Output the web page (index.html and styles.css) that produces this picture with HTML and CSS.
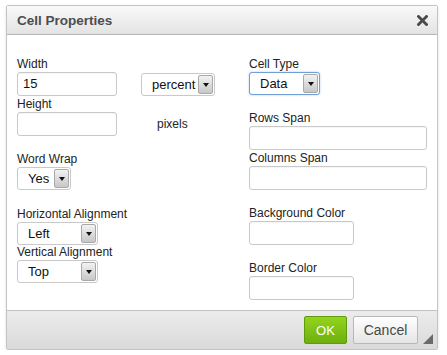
FILE: index.html
```html
<!DOCTYPE html>
<html lang="en">

<head>
  <meta charset="UTF-8">
  <meta name="viewport" content="width=device-width, initial-scale=1.0">
  <title>Cell Properties</title>
  <link rel="stylesheet" href="styles.css">
</head>

<body>

  <div class="dialog">
    <div class="dialog-title">
      <span>Cell Properties</span>
      <svg class="close" width="11" height="11" viewBox="0 0 11 11">
        <path d="M1.5 1.5 L9.5 9.5 M9.5 1.5 L1.5 9.5" stroke="#4a4a4a" stroke-width="2.8" stroke-linecap="square" />
      </svg>
    </div>

    <div class="dialog-body">
      <div class="col col-left">
        <div class="pair">
          <div class="field">
            <label>Width</label>
            <div class="input w100">15</div>
          </div>
          <div class="select w74"><span>percent</span><i class="arrow"></i></div>
        </div>
        <div class="pair pair-height">
          <div class="field">
            <label>Height</label>
            <div class="input w100"></div>
          </div>
          <div class="unit">pixels</div>
        </div>

        <div class="field gap">
          <label>Word Wrap</label>
          <div class="select w54"><span>Yes</span><i class="arrow"></i></div>
        </div>

        <div class="field gap">
          <label>Horizontal Alignment</label>
          <div class="select w81"><span>Left</span><i class="arrow"></i></div>
        </div>
        <div class="field">
          <label>Vertical Alignment</label>
          <div class="select w81"><span>Top</span><i class="arrow"></i></div>
        </div>
      </div>

      <div class="col col-right">
        <div class="field">
          <label>Cell Type</label>
          <div class="select w71 focused"><span>Data</span><i class="arrow"></i></div>
        </div>
        <div class="field gap">
          <label>Rows Span</label>
          <div class="input w178"></div>
        </div>
        <div class="field tight">
          <label>Columns Span</label>
          <div class="input w178"></div>
        </div>
        <div class="field gap">
          <label>Background Color</label>
          <div class="input w105"></div>
        </div>
        <div class="field gap">
          <label>Border Color</label>
          <div class="input w105"></div>
        </div>
      </div>
    </div>

    <div class="dialog-footer">
      <button class="btn btn-ok">OK</button>
      <button class="btn btn-cancel">Cancel</button>
    </div>

    <svg class="resizer" width="10" height="10" viewBox="0 0 10 10">
      <path d="M10 0 L10 10 L0 10 Z" fill="#6a6a6a" />
    </svg>
  </div>

</body>

</html>
```

FILE: styles.css
```css
body {
  margin: 0;
  padding: 0;
  background-color: #fff;
  font-family: "Liberation Sans", Arial, sans-serif;
  font-size: 12px;
  color: #222;
}

.dialog {
  position: relative;
  width: 432px;
  margin: 5px 0 0 6px;
  border: 1px solid #c4c4c4;
  border-radius: 2px;
  box-shadow: 0 1px 3px rgba(0, 0, 0, 0.12);
  box-sizing: border-box;
}

.dialog-title {
  display: flex;
  align-items: center;
  justify-content: space-between;
  height: 28px;
  padding: 0 9px 0 10px;
  background: linear-gradient(#f9f9f9, #e3e3e3);
  border-bottom: 1px solid #b4b4b4;
  font-size: 13.5px;
  font-weight: bold;
  color: #4d4d4d;
}

.close {
  margin-top: 1px;
}

.dialog-body {
  display: flex;
  height: 275px;
  padding: 22px 10px 0 10px;
  background-color: #fff;
  box-sizing: border-box;
}

.col-left {
  width: 232px;
}

.col-right {
  width: 178px;
}

.field label {
  display: block;
  height: 15px;
  line-height: 15px;
}

.field.gap {
  margin-top: 16px;
}

.col-left .field.gap:nth-child(4) {
  margin-top: 17px;
}

.field.tight,
.pair-height {
  margin-top: 1px;
}

.pair {
  display: flex;
  align-items: flex-end;
  gap: 24px;
}

.unit {
  height: 24px;
  line-height: 24px;
  margin-left: 16px;
}

.input,
.select {
  height: 24px;
  line-height: 22px;
  border: 1px solid #c9c9c9;
  border-radius: 3px;
  background-color: #fff;
  box-sizing: border-box;
  font-size: 13px;
  color: #111;
}

.input {
  padding-left: 5px;
  box-shadow: inset 0 1px 1px rgba(0, 0, 0, 0.04);
}

.select {
  display: flex;
  justify-content: space-between;
  height: 23px;
  line-height: 21px;
  padding: 0 1px 0 10px;
}

.select.focused {
  border-color: #6f9fd6;
  box-shadow: 0 0 2px rgba(90, 140, 210, 0.5);
}

.arrow {
  position: relative;
  width: 15px;
  height: 19px;
  margin-top: 1px;
  border: 1px solid #a9a9a9;
  border-radius: 2px;
  background: linear-gradient(#f2f2f2, #c7c7c7);
  box-sizing: border-box;
}

.arrow::after {
  content: "";
  position: absolute;
  left: 3.5px;
  top: 7px;
  border-left: 3.5px solid transparent;
  border-right: 3.5px solid transparent;
  border-top: 4px solid #111;
}

.w54 { width: 54px; }
.w71 { width: 71px; }
.w74 { width: 74px; }
.w81 { width: 81px; }
.w100 { width: 100px; }
.w105 { width: 105px; }
.w178 { width: 178px; }

.dialog-footer {
  display: flex;
  justify-content: flex-end;
  align-items: flex-start;
  gap: 6px;
  height: 39px;
  padding: 5px 19px 0 0;
  border-top: 1px solid #c2c2c2;
  background: linear-gradient(#ececec, #d9d9d9);
  box-sizing: border-box;
}

.btn {
  height: 28px;
  padding: 0;
  border-radius: 2px;
  font-family: "Liberation Sans", Arial, sans-serif;
  font-size: 13px;
}

.btn-ok {
  width: 43px;
  border: 1px solid #5e9c0d;
  background: linear-gradient(#94d31e, #6db00d);
  color: #fff;
}

.btn-cancel {
  width: 65px;
  border: 1px solid #b8b8b8;
  background: linear-gradient(#ffffff, #e5e5e5);
  color: #474747;
  font-size: 14px;
}

.resizer {
  position: absolute;
  right: 4px;
  bottom: 5px;
}
```
